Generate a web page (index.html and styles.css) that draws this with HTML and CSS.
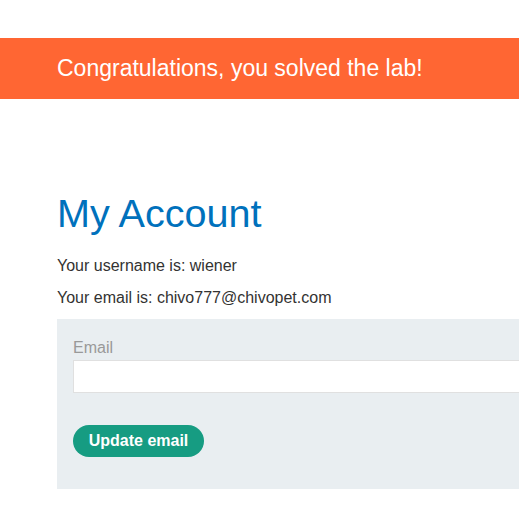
FILE: index.html
```html
<!DOCTYPE html>
<html>
<head>
<meta charset="utf-8">
<link rel="stylesheet" href="styles.css">
</head>
<body>
<div class="page">
  <div class="banner"><h4>Congratulations, you solved the lab!</h4></div>
  <section class="content">
    <h1>My Account</h1>
    <p>Your username is: wiener</p>
    <p class="last">Your email is: chivo777@chivopet.com</p>
    <form class="email-form">
      <label for="email">Email</label>
      <input id="email" type="email" name="email">
      <button type="button" class="btn">Update email</button>
    </form>
  </section>
</div>
</body>
</html>
```
FILE: styles.css
```css
html, body {
  margin: 0;
  padding: 0;
  overflow: hidden;
  background: #fff;
}
body {
  font-family: "Liberation Sans", Arial, sans-serif;
  color: #333332;
  font-size: 16px;
}
.page {
  padding-top: 38px;
  width: 700px;
}
.banner {
  background: #ff6633;
  height: 61px;
  display: flex;
  align-items: center;
  padding-left: 57px;
}
.banner h4 {
  margin: 0;
  color: #fff;
  font-weight: normal;
  font-size: 23px;
}
.content {
  padding-left: 57px;
  padding-top: 90px;
}
h1 {
  margin: 0 0 19px 0;
  font-weight: normal;
  color: #0071bc;
  font-size: 39.6px;
  line-height: 48px;
}
p {
  margin: 0 0 12px 0;
  line-height: 20px;
}
p.last {
  margin-bottom: 11px;
}
.email-form {
  background: #e9eef1;
  margin-top: 0;
  padding: 18px 16px 32px 16px;
  display: flex;
  flex-direction: column;
  align-items: flex-start;
}
label {
  color: #999;
  font-size: 16px;
  line-height: 22px;
  margin-bottom: 1px;
}
input {
  box-sizing: border-box;
  width: 100%;
  height: 33px;
  border: 1px solid #e0e0e0;
  background: #fff;
  margin: 0 0 32px 0;
  padding: 0 8px;
  font: inherit;
}
.btn {
  background: #169c82;
  color: #fff;
  border: none;
  border-radius: 16px;
  height: 32px;
  width: 131px;
  font-family: inherit;
  font-weight: bold;
  font-size: 16px;
  padding: 0;
}
```
